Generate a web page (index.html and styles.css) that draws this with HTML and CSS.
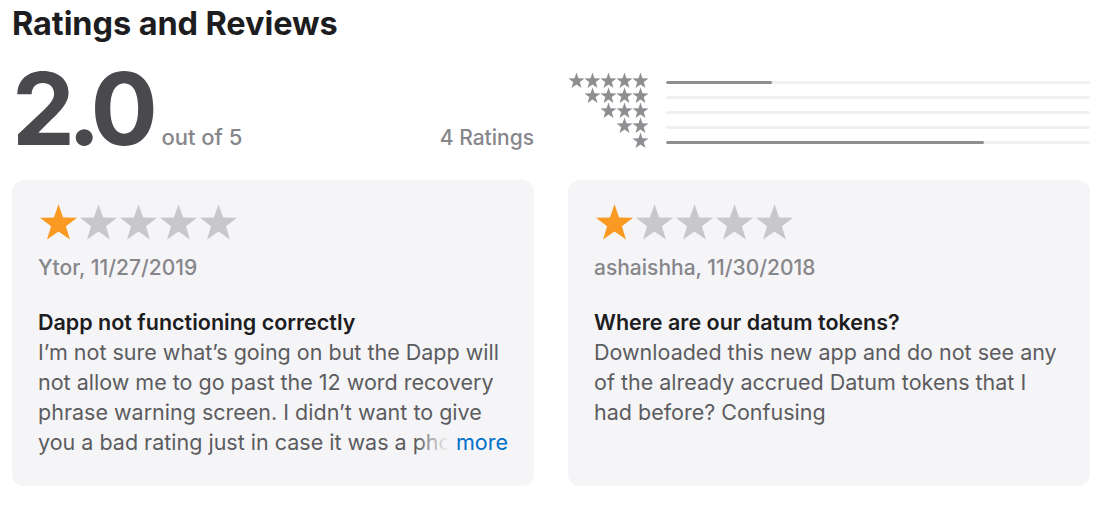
FILE: index.html
```html
<!DOCTYPE html>
<html lang="en">
<head>
<meta charset="utf-8">
<title>Ratings and Reviews</title>
<link rel="stylesheet" href="styles.css">
</head>
<body>
<svg width="0" height="0" class="defs" aria-hidden="true">
  <defs>
    <symbol id="star" viewBox="0 0 24 24">
      <polygon points="12,0.8 14.82,8.92 23.41,9.09 16.57,14.28 19.05,22.51 12,17.6 4.95,22.51 7.43,14.28 0.59,9.09 9.18,8.92"/>
    </symbol>
  </defs>
</svg>
<main class="section">
  <h2 class="section-title">Ratings and Reviews</h2>
  <div class="summary">
    <div class="score">
      <div class="score-main">
        <span class="score-value">2.0</span>
        <span class="score-out">out of 5</span>
      </div>
      <span class="score-count">4 Ratings</span>
    </div>
    <div class="histogram">
      <div class="hist-row">
        <span class="hist-stars"><svg><use href="#star"/></svg><svg><use href="#star"/></svg><svg><use href="#star"/></svg><svg><use href="#star"/></svg><svg><use href="#star"/></svg></span>
        <span class="hist-bar"><span class="hist-fill" style="width:25%"></span></span>
      </div>
      <div class="hist-row">
        <span class="hist-stars"><svg><use href="#star"/></svg><svg><use href="#star"/></svg><svg><use href="#star"/></svg><svg><use href="#star"/></svg></span>
        <span class="hist-bar"><span class="hist-fill" style="width:0%"></span></span>
      </div>
      <div class="hist-row">
        <span class="hist-stars"><svg><use href="#star"/></svg><svg><use href="#star"/></svg><svg><use href="#star"/></svg></span>
        <span class="hist-bar"><span class="hist-fill" style="width:0%"></span></span>
      </div>
      <div class="hist-row">
        <span class="hist-stars"><svg><use href="#star"/></svg><svg><use href="#star"/></svg></span>
        <span class="hist-bar"><span class="hist-fill" style="width:0%"></span></span>
      </div>
      <div class="hist-row">
        <span class="hist-stars"><svg><use href="#star"/></svg></span>
        <span class="hist-bar"><span class="hist-fill" style="width:75%"></span></span>
      </div>
    </div>
  </div>
  <div class="reviews">
    <article class="review">
      <div class="review-stars">
        <svg class="on"><use href="#star"/></svg><svg><use href="#star"/></svg><svg><use href="#star"/></svg><svg><use href="#star"/></svg><svg><use href="#star"/></svg>
      </div>
      <div class="review-meta">Ytor, 11/27/2019</div>
      <h3 class="review-title">Dapp not functioning correctly</h3>
      <div class="review-body">
        <p>I’m not sure what’s going on but the Dapp will not allow me to go past the 12 word recovery phrase warning screen. I didn’t want to give you a bad rating just in case it was a phone issue, but I really need to get past this screen.</p>
        <a class="more" href="#">more</a>
      </div>
    </article>
    <article class="review">
      <div class="review-stars">
        <svg class="on"><use href="#star"/></svg><svg><use href="#star"/></svg><svg><use href="#star"/></svg><svg><use href="#star"/></svg><svg><use href="#star"/></svg>
      </div>
      <div class="review-meta">ashaishha, 11/30/2018</div>
      <h3 class="review-title">Where are our datum tokens?</h3>
      <div class="review-body">
        <p>Downloaded this new app and do not see any of the already accrued Datum tokens that I had before? Confusing</p>
      </div>
    </article>
  </div>
</main>
</body>
</html>
```

FILE: styles.css
```css
html, body {
  margin: 0;
  padding: 0;
  background: #ffffff;
}

body {
  font-family: Inter, "Liberation Sans", Arial, sans-serif;
  color: #1d1d1f;
}

.defs {
  position: absolute;
  width: 0;
  height: 0;
  overflow: hidden;
}

.section {
  width: 1078px;
  padding: 0 0 0 12px;
}

.section-title {
  margin: 0;
  padding-top: 4px;
  font-size: 32.5px;
  line-height: 40px;
  font-weight: 700;
  letter-spacing: -0.1px;
  color: #1d1d1f;
}

.summary {
  display: grid;
  grid-template-columns: 522px 522px;
  column-gap: 34px;
  margin-top: 20px;
  height: 116px;
}

.score {
  display: flex;
  justify-content: space-between;
  align-items: baseline;
  height: 90px;
}

.score-main {
  display: flex;
  align-items: baseline;
  gap: 11px;
}

.score-value {
  font-size: 100px;
  line-height: 90px;
  font-weight: 700;
  letter-spacing: -7.5px;
  color: #4a4a4e;
}

.score-out {
  font-size: 22px;
  font-weight: 500;
  color: #86868b;
}

.score-count {
  font-size: 21px;
  font-weight: 500;
  color: #86868b;
}

.histogram {
  display: flex;
  flex-direction: column;
  padding-top: 10px;
}

.hist-row {
  display: flex;
  align-items: center;
  height: 15px;
  gap: 17px;
}

.hist-stars {
  display: flex;
  justify-content: flex-end;
  width: 81px;
  gap: 0;
  margin-top: -2px;
}

.hist-stars svg {
  width: 17px;
  height: 17px;
  margin-left: -1px;
  fill: #8e8e93;
}

.hist-bar {
  flex: 1;
  height: 3px;
  margin-top: 2px;
  background: #f0f0f4;
  border-radius: 2px;
  overflow: hidden;
  display: flex;
}

.hist-fill {
  display: block;
  height: 100%;
  background: #8e8e93;
  border-radius: 2px;
}

.reviews {
  display: grid;
  grid-template-columns: 522px 522px;
  column-gap: 34px;
}

.review {
  background: #f5f5f7;
  border-radius: 12px;
  height: 306px;
  padding: 23px 26px 0 26px;
  box-sizing: border-box;
}

.review-stars {
  display: flex;
  gap: 1px;
  height: 39px;
  margin-left: 1px;
}

.review-stars svg {
  width: 39px;
  height: 39px;
  fill: #c7c7cc;
}

.review-stars svg.on {
  fill: #fa9a22;
}

.review-meta {
  margin-top: 13px;
  font-size: 21px;
  line-height: 26px;
  font-weight: 500;
  color: #86868b;
}

.review-title {
  margin: 26px 0 0 0;
  font-size: 21.5px;
  line-height: 30px;
  font-weight: 600;
  color: #1d1d1f;
}

.review-body {
  position: relative;
  max-height: 120px;
  overflow: hidden;
}

.review-body p {
  margin: 0;
  font-size: 21.5px;
  line-height: 30px;
  color: #5c5c60;
}

.more {
  position: absolute;
  right: 0;
  bottom: 0;
  font-size: 21.5px;
  line-height: 30px;
  color: #0070c9;
  text-decoration: none;
  padding-left: 40px;
  background: linear-gradient(to right, rgba(245, 245, 247, 0) 0, #f5f5f7 32px);
}
```
